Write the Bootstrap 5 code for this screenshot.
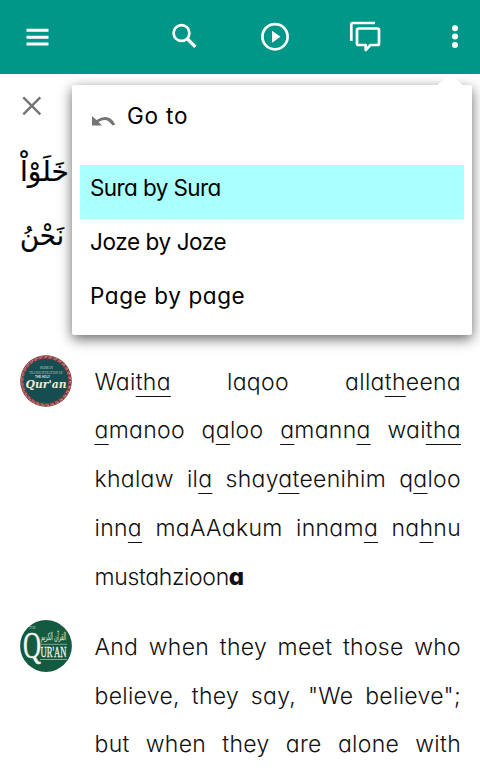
<!DOCTYPE html>
<html lang="en">
<head>
<meta charset="utf-8">
<meta name="viewport" content="width=device-width, initial-scale=1">
<title>Quran reader</title>
<link href="https://cdn.jsdelivr.net/npm/bootstrap@5.3.0/dist/css/bootstrap.min.css" rel="stylesheet">
<style>
body{font-family:Inter,"Open Sans",sans-serif;font-feature-settings:"cv11" 1,"kern" 1;color:#000;height:774px;overflow:hidden;background:#fff}
.topbar{height:74px;background:#009688;padding:0 22px}
.topbar button,.closer{border:0;background:none;padding:0;line-height:0}
.btn-search{margin-left:117px}
.btn-play{margin-left:61px}
.btn-talk{margin-left:58px}
.btn-more{margin-left:66px}
.verses{padding:21px 19px 0 20px;height:700px}
.arabic{height:236px}
.arabic svg{display:block;stroke:#000;stroke-width:.2}
.entry{gap:22.500px}
.entry + .entry{margin-top:19px}
.entry-body{margin-top:2.500px;letter-spacing:.3px}
.logo{width:52px;height:52px;flex:none}
.line-text{font-size:23px;font-weight:300;line-height:48.75px;text-align:justify;text-align-last:justify;white-space:nowrap;color:#111}
.line-text.final{text-align-last:left;letter-spacing:-.35px}
.line-text.final b{font-weight:800;font-size:24px;line-height:1}
.line-text u{text-decoration-thickness:1.300px;text-underline-offset:6px;text-decoration-skip-ink:none}
.jump-menu{position:absolute;left:72px;top:85px;width:400px;height:250px;background:#fff;border-radius:2px;box-shadow:0 4px 13px rgba(0,0,0,.6);padding:8px;font-size:22.5px;font-weight:400;z-index:5}
.jump-arrow{position:absolute;right:2px;top:-11px;width:40px;height:12px;overflow:visible}
.jump-head{height:72px;padding:4px 10px 0 12px;gap:11px;line-height:38px;letter-spacing:.8px}
.jump-head svg{margin-top:17px}
.jump-menu a{display:block;height:54px;padding:0 10px;line-height:46px;color:#000;text-decoration:none;white-space:nowrap}
.jump-menu a.current{background:#aff;letter-spacing:-.6px}
.jump-menu a.joze{letter-spacing:-.4px}
.jump-menu a.page{letter-spacing:.6px}
</style>
</head>
<body>
<header class="topbar d-flex align-items-center">
  <button aria-label="Menu"><svg width="30" height="30" viewBox="0 0 30 30"><path d="M4.500 8.300h22M4.500 15.200h22M4.500 22h22" stroke="#fff" stroke-width="2.900"/></svg></button>
  <button class="btn-search" aria-label="Search"><svg width="30" height="30" viewBox="0 0 30 30" fill="none" stroke="#fff"><circle cx="12.500" cy="11" r="7.900" stroke-width="2.700"/><path d="M18 16.500l8.300 8.300" stroke-width="3.300"/></svg></button>
  <button class="btn-play" aria-label="Play"><svg width="30" height="30" viewBox="0 0 30 30"><circle cx="15" cy="14.700" r="12.600" fill="none" stroke="#fff" stroke-width="2.700"/><path d="M12 8.800v12l8.500-6z" fill="#fff"/></svg></button>
  <button class="btn-talk" aria-label="Comments"><svg width="34" height="34" viewBox="0 0 34 34" fill="none" stroke="#fff" stroke-width="2.700" stroke-linejoin="round"><path d="M3.300 21V4.500q0-1.500 1.500-1.500H27"/><path d="M10.500 8.500h19q1.500 0 1.500 1.500v13.500q0 1.500-1.500 1.500h-7L17.700 30v-5h-7.200Q9 25 9 23.500V10q0-1.500 1.500-1.500z"/></svg></button>
  <button class="btn-more" aria-label="More"><svg width="14" height="30" viewBox="0 0 14 30" fill="#fff"><circle cx="7" cy="6.300" r="3"/><circle cx="7" cy="14.600" r="3"/><circle cx="7" cy="22.900" r="3"/></svg></button>
</header>

<main class="verses">
  <button class="closer d-block" aria-label="Close"><svg width="24" height="24" viewBox="0 0 24 24"><path d="M3.300 2.300l17 17M20.300 2.300l-17 17" stroke="#757575" stroke-width="2.400"/></svg></button>
  <div class="arabic pt-3" lang="ar">
    <svg width="52" height="130" viewBox="0 0 52 130" font-family="'DejaVu Sans',sans-serif" font-size="28">
      <text x="0" y="46" textLength="49" lengthAdjust="spacingAndGlyphs">خَلَوْاْ</text>
      <text x="0" y="110" textLength="44" lengthAdjust="spacingAndGlyphs">نَحْنُ</text>
    </svg>
  </div>

  <section class="entry d-flex">
    <svg class="logo" viewBox="0 0 52 52">
      <circle cx="26" cy="26" r="25.800" fill="#693f43"/>
      <circle cx="26" cy="26" r="24" fill="none" stroke="#b9585a" stroke-width="3" stroke-dasharray="3 2"/>
      <circle cx="26" cy="26" r="24.500" fill="none" stroke="#c2aaa0" stroke-width="1.200" stroke-dasharray="1 4"/>
      <circle cx="26" cy="26" r="22.200" fill="#164d51"/>
      <g fill="#b5c3b9" font-family="'Liberation Serif',serif" font-size="3.800"><text x="20" y="14" textLength="13">ROMAN</text><text x="9" y="18.500" textLength="34" lengthAdjust="spacingAndGlyphs">TRANSLITERATION OF</text></g>
      <text x="15" y="23.200" fill="#d9e0ef" font-family="'Liberation Sans',sans-serif" font-weight="700" font-size="3.800" textLength="15" lengthAdjust="spacingAndGlyphs">THE HOLY</text>
      <text x="5.500" y="32.800" fill="#f3ead0" font-family="'DejaVu Serif',serif" font-style="italic" font-weight="700" font-size="11.500" textLength="41" lengthAdjust="spacingAndGlyphs">Qur'an</text>
    </svg>
    <div class="entry-body flex-grow-1">
      <div class="line-text">Wai<u>tha</u> laqoo alla<u>th</u>eena</div>
      <div class="line-text"><u>a</u>manoo q<u>a</u>loo <u>a</u>mann<u>a</u> wai<u>tha</u></div>
      <div class="line-text">khalaw il<u>a</u> shay<u>at</u>eenihim q<u>a</u>loo</div>
      <div class="line-text">inn<u>a</u> maAAakum innam<u>a</u> na<u>h</u>nu</div>
      <div class="line-text final">mustahzioon<b>a</b></div>
    </div>
  </section>

  <section class="entry d-flex">
    <svg class="logo" viewBox="0 0 52 52">
      <circle cx="26" cy="26" r="25.900" fill="#145a40"/>
      <text x="9" y="8.500" fill="#b9cdb9" font-family="'Liberation Serif',serif" font-size="3.500" textLength="7">THE</text>
      <text x="3" y="38" fill="#f3f8ef" stroke="#f3f8ef" stroke-width=".4" font-family="'Liberation Serif',serif" font-size="37" textLength="18" lengthAdjust="spacingAndGlyphs">Q</text>
      <text x="21" y="20" fill="#c8d7b5" stroke="#c8d7b5" stroke-width=".3" font-family="'DejaVu Sans',sans-serif" font-size="10" textLength="25" lengthAdjust="spacingAndGlyphs">القرآن الكريم</text>
      <text x="20.500" y="37" fill="#f3f8ef" stroke="#f3f8ef" stroke-width=".3" font-family="'Liberation Serif',serif" font-size="15" textLength="26" lengthAdjust="spacingAndGlyphs">UR'AN</text>
      <path d="M20 24.300h27M20 39.500h27" stroke="#adc9ad" stroke-width=".7"/>
    </svg>
    <div class="entry-body flex-grow-1">
      <div class="line-text">And when they meet those who</div>
      <div class="line-text">believe, they say, "We believe";</div>
      <div class="line-text">but when they are alone with</div>
    </div>
  </section>
</main>

<nav class="jump-menu">
  <svg class="jump-arrow" viewBox="0 0 40 12"><path d="M6 12L18.500 1.200q1.500-1.200 3 0L34 12z" fill="#fff"/></svg>
  <div class="jump-head d-flex align-items-start">
    <svg width="24" height="18" viewBox="0 0 24 18"><path d="M0 2v9.500h10L6.500 8Q15 2.500 20.500 11.500l2.800-1Q17-1.500 4.500 5.900z" fill="#757575"/></svg>
    <span>Go to</span>
  </div>
  <a class="current" href="#">Sura by Sura</a>
  <a class="joze" href="#">Joze by Joze</a>
  <a class="page" href="#">Page by page</a>
</nav>
<script src="https://cdn.jsdelivr.net/npm/bootstrap@5.3.0/dist/js/bootstrap.bundle.min.js"></script>
</body>
</html>
